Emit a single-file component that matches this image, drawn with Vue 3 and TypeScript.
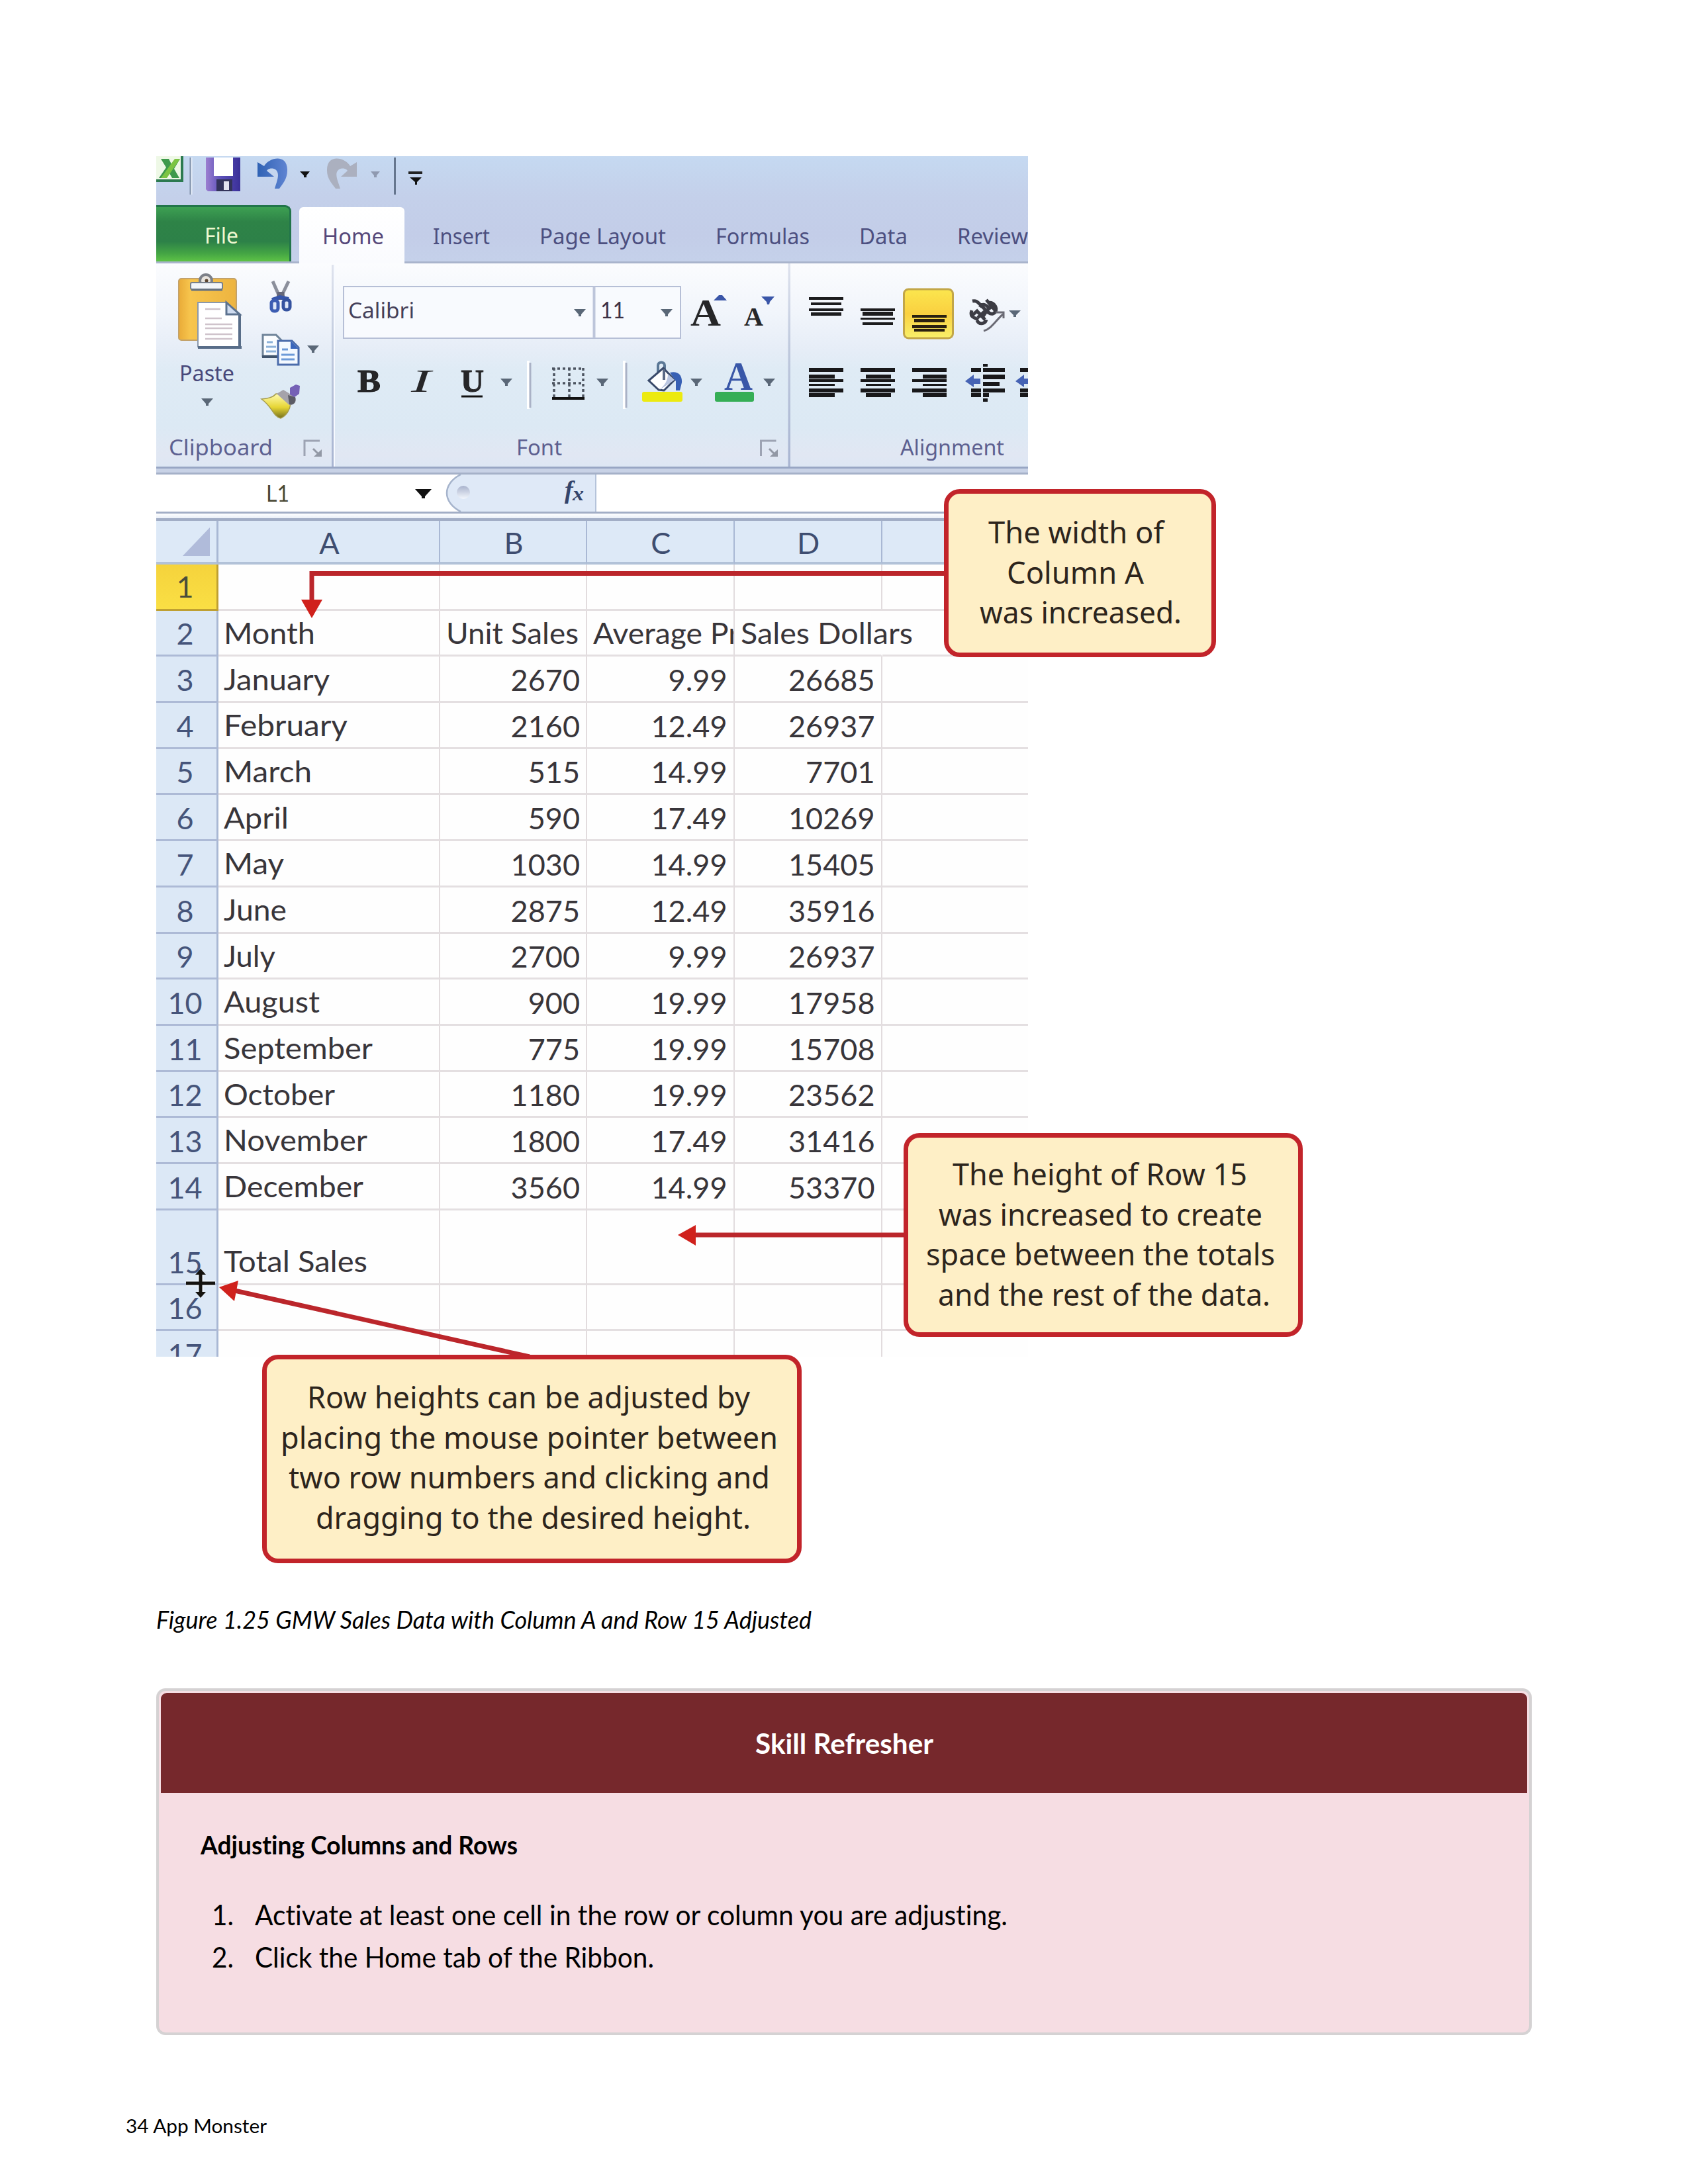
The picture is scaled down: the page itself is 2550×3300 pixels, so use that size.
<script setup lang="ts">
import { h } from 'vue'

interface FitProps { t: string; w: number; s: number; x?: number }

// One line of text set to an exact width; the box's bottom edge is the baseline.
const Fit = (p: FitProps) =>
  h('svg', { width: p.w, height: p.s, style: { display: 'block', flex: 'none', overflow: 'visible', marginLeft: p.x ? p.x + 'px' : undefined } }, [
    h('text', { x: 0, y: p.s, 'font-size': p.s, fill: 'currentColor', textLength: p.w, lengthAdjust: 'spacingAndGlyphs' }, p.t),
  ])
Fit.props = ['t', 'w', 's', 'x']

const tabs = [
  { t: 'Insert', w: 86, x: 43 },
  { t: 'Page Layout', w: 191, x: 75 },
  { t: 'Formulas', w: 142, x: 75 },
  { t: 'Data', w: 73, x: 75 },
  { t: 'Review', w: 107, x: 75 },
]

type Row = [string, number, string, string, string]
const rows: Row[] = [
  ['January', 160, '2670', '9.99', '26685'],
  ['February', 187, '2160', '12.49', '26937'],
  ['March', 133, '515', '14.99', '7701'],
  ['April', 98, '590', '17.49', '10269'],
  ['May', 91, '1030', '14.99', '15405'],
  ['June', 95, '2875', '12.49', '35916'],
  ['July', 78, '2700', '9.99', '26937'],
  ['August', 145, '900', '19.99', '17958'],
  ['September', 225, '775', '19.99', '15708'],
  ['October', 168, '1180', '19.99', '23562'],
  ['November', 217, '1800', '17.49', '31416'],
  ['December', 211, '3560', '14.99', '53370'],
]

const callouts = [
  { cls: 'c1', lines: [
    { t: 'The width of', x: 60, w: 265 }, { t: 'Column A', x: 88, w: 207 }, { t: 'was increased.', x: 47, w: 305 } ] },
  { cls: 'c2', lines: [
    { t: 'The height of Row 15', x: 67, w: 445 }, { t: 'was increased to create', x: 46, w: 489 },
    { t: 'space between the totals', x: 27, w: 527 }, { t: 'and the rest of the data.', x: 45, w: 502 } ] },
  { cls: 'c3', lines: [
    { t: 'Row heights can be adjusted by', x: 61, w: 669 }, { t: 'placing the mouse pointer between', x: 21, w: 751 },
    { t: 'two row numbers and clicking and', x: 33, w: 727 }, { t: 'dragging to the desired height.', x: 74, w: 657 } ] },
]

// [y, thickness, full?] strokes of the paragraph alignment icons
const para: [number, number, boolean][] = [
  [556, 6, true], [566, 6, false], [573, 4, true], [580, 3, false], [587, 6, true], [594, 6, false],
]
const aligns = [ { x: 1222, o: 0, w: 39 }, { x: 1300, o: 8, w: 38 }, { x: 1378, o: 16, w: 36 } ]
const carets = [[867, 467], [998, 467], [756, 572], [901, 572], [1043, 572], [1153, 572]]
</script>

<template>
  <main class="page">
    <section class="figure">
      <div class="shot">
        <svg class="qat" width="1317" height="74" viewBox="236 236 1317 74">
          <rect x="230" y="230" width="45" height="43" fill="#eef8e6" stroke="#2c7a50" stroke-width="4" />
          <path d="M243 240h12l5 10 5-10h7l-9 15 8 14h-11l-5-9-6 9h-9l11-16z" fill="#3f9a4c" />
          <path d="M264 240h8l-20 29h-9z" fill="#7cc443" />
          <path d="M288 238v56" stroke="#7f8fa8" stroke-width="3" />
          <path d="M289.500 238v56" stroke="#e6eefa" stroke-width="2" />
          <defs>
            <linearGradient id="disk" x1="0" x2="1"><stop offset="0" stop-color="#9c7fd0" /><stop offset=".45" stop-color="#5a4fb8" /><stop offset="1" stop-color="#3a2f98" /></linearGradient>
            <linearGradient id="undo" x1="0" x2="1"><stop offset="0" stop-color="#2f62b4" /><stop offset="1" stop-color="#5f84d2" /></linearGradient>
          </defs>
          <path d="M311 238h52v51h-49l-3-3z" fill="url(#disk)" />
          <rect x="323" y="238" width="29" height="28" fill="#fff" />
          <rect x="327" y="271" width="24" height="18" fill="#33335a" />
          <rect x="338" y="274" width="8" height="13" fill="#e3e3ee" />
          <path d="M389 245l10 6c8-14 36-19 35 7 0 12-7 20-12 27h-7c3-11 9-23 1-29-6-3-11-1-13 2l11 9h-25z" fill="url(#undo)" />
          <path d="M453 259h15l-5 6v3h-4v-3z" fill="#111" />
          <path d="M539 245l-10 6c-8-14-36-19-35 7 0 12 8 20 13 27h7c-3-11-10-23-2-29 6-3 11-1 13 2l-10 9h24z" fill="#abb0bf" />
          <path d="M560 259h14l-5 6v3h-4v-3z" fill="#8f99b0" />
          <path d="M596.500 238v56" stroke="#66768e" stroke-width="3" />
          <path d="M617 261h21" stroke="#222" stroke-width="4" />
          <path d="M619 268h18l-7 7v4h-3v-4z" fill="#111" />
        </svg>

        <nav class="tabs">
          <div class="tab file"><Fit t="File" :w="51" :s="32" /></div>
          <div class="tab home"><Fit t="Home" :w="93" :s="32" /></div>
          <Fit v-for="tab in tabs" :key="tab.t" class="plain" :t="tab.t" :w="tab.w" :s="32" :x="tab.x" />
        </nav>

        <div class="ribbon">
          <svg class="group" width="268" height="307" viewBox="236 398 268 307">
            <defs>
              <linearGradient id="board" x1="0" x2="1"><stop offset="0" stop-color="#e9ab38" /><stop offset=".2" stop-color="#f7c54d" /><stop offset="1" stop-color="#edb440" /></linearGradient>
              <linearGradient id="brush" x1="0" y1="0" x2="0" y2="1"><stop offset="0" stop-color="#fffbb0" /><stop offset=".55" stop-color="#e6d534" /><stop offset="1" stop-color="#75701e" /></linearGradient>
              <linearGradient id="sepg" x1="0" y1="0" x2="0" y2="1"><stop offset="0" stop-color="#dfe3ee" /><stop offset=".4" stop-color="#c0cade" /><stop offset="1" stop-color="#a9b5d2" /></linearGradient>
            </defs>
            <rect x="270" y="421" width="87" height="93" rx="4" fill="url(#board)" stroke="#c3a26a" stroke-width="2" />
            <circle cx="311" cy="424" r="9" fill="#e8e4de" stroke="#7c8088" stroke-width="4" />
            <circle cx="312" cy="424" r="2.500" fill="#5c4630" />
            <rect x="288" y="427" width="48" height="10" rx="2" fill="#f2f5f9" stroke="#77808c" stroke-width="2" />
            <path d="M289 438h47" stroke="#687380" stroke-width="3" />
            <path d="M299 457h43l21 18v49h-64z" fill="#fff" stroke="#8a98ab" stroke-width="2" />
            <path d="M362 474v50M299 525h66" stroke="#586d88" stroke-width="4" />
            <path d="M342 457v18h20z" fill="#cfdcf0" stroke="#5c728f" stroke-width="3" />
            <path d="M310 467h23M310 481h25M310 490h41M310 496h41M310 505h41M310 512h41" stroke="#cfc3cb" stroke-width="2.500" />
            <text x="271" y="576" font-size="32" textLength="83" lengthAdjust="spacingAndGlyphs" fill="#48487a">Paste</text>
            <path d="M304 602h18l-7 8v3h-4v-3z" fill="#5a6777" />
            <path d="M412 425l11 25M436 425l-12 25" stroke="#8b8f9b" stroke-width="5" fill="none" />
            <path d="M419 441h10l2 12h-14z" fill="#66687a" />
            <path d="M411 453l12-4 13 3" stroke="#3756aa" stroke-width="6" fill="none" />
            <rect x="410" y="454" width="10" height="16" rx="4" fill="#dfe9f8" stroke="#3c5db2" stroke-width="5" />
            <rect x="428" y="453" width="10" height="15" rx="4" fill="#dfe9f8" stroke="#34529f" stroke-width="5" />
            <path d="M397 506h20l8 8v24h-28z" fill="#fbfdff" stroke="#6f8499" stroke-width="3" />
            <path d="M396 539h24" stroke="#41546c" stroke-width="4" />
            <path d="M403 517h9M402 524h15M402 531h15" stroke="#8db2d9" stroke-width="3" />
            <path d="M420 515h21l10 10v26h-31z" fill="#f4f9ff" stroke="#4b6cab" stroke-width="3" />
            <path d="M439 515v12h12z" fill="#3a66bc" />
            <path d="M426 528h9M425 536h20M425 543h20" stroke="#6c9ad8" stroke-width="3" />
            <path d="M464 522h18l-7 8v3h-4v-3z" fill="#5a6777" />
            <path d="M395 603c9-1 17-2 22-8l10 1 12 14c-1 9-6 18-15 22-12-3-12-17-29-29z" fill="url(#brush)" stroke="#a59b4b" stroke-width="1.500" />
            <path d="M418 595l10-6 18 11c3 8-2 12-9 12z" fill="#a5a3aa" />
            <path d="M435 597l11 3c2 8-3 13-9 11z" fill="#5b5b65" />
            <path d="M438 586l9-5 6 2-1 12-7 5-7-4z" fill="#7561b6" />
            <text x="255" y="688" font-size="33" textLength="157" lengthAdjust="spacingAndGlyphs" fill="#5d6090">Clipboard</text>
            <path d="M460 689v-23h23" stroke="#9da3b3" stroke-width="3" fill="none" />
            <path d="M473 678l7 7" stroke="#9298a5" stroke-width="3" /><path d="M486 679v11h-12z" fill="#9298a5" />
            <rect x="501" y="400" width="3" height="305" fill="url(#sepg)" />
          </svg>

          <svg class="group" width="690" height="307" viewBox="504 398 690 307">
            <path d="M505 400v305" stroke="#f7faff" stroke-width="2" />
            <rect x="519" y="433" width="509" height="78" fill="#f8fafe" stroke="#b6bfd6" stroke-width="2" />
            <rect x="895.500" y="433" width="4" height="78" fill="#bdc5da" />
            <text x="526" y="481" font-size="33" textLength="100" lengthAdjust="spacingAndGlyphs" fill="#44405a">Calibri</text>
            <text x="907" y="481" font-size="34" textLength="37" lengthAdjust="spacingAndGlyphs" fill="#3c3044" font-family="Lato">11</text>
            <path v-for="c in carets" :key="c.join()" :d="`M${c[0]} ${c[1]}h18l-7 8v3h-4v-3z`" fill="#5a6777" />
            <g font-family="'Liberation Serif', serif" font-weight="700" fill="#262628">
              <text x="1043" y="492" font-size="58" textLength="46" lengthAdjust="spacingAndGlyphs">A</text>
              <text x="1124" y="492" font-size="41" textLength="29" lengthAdjust="spacingAndGlyphs">A</text>
              <text x="540" y="592" font-size="49" textLength="35" lengthAdjust="spacingAndGlyphs" stroke="#1a1a1c">B</text>
              <text x="621" y="592" font-size="49" textLength="30" lengthAdjust="spacingAndGlyphs" font-weight="400" font-style="italic">I</text>
              <text x="696" y="592" font-size="48" textLength="35" lengthAdjust="spacingAndGlyphs" stroke="#262628">U</text>
              <text x="1094" y="589" font-size="61" textLength="43" lengthAdjust="spacingAndGlyphs" fill="#3957a8">A</text>
            </g>
            <path d="M1078 454l8-8h5l7 8z" fill="#3a56a8" />
            <path d="M1150 448h20l-7 8-1 4h-3l-1-4z" fill="#3a56a8" />
            <path d="M697 599h32" stroke="#111" stroke-width="3" />
            <g v-for="x in [798, 943]" :key="x"><path :d="`M${x} 545v73`" stroke="#fff" stroke-width="4" /><path :d="`M${x + 3} 548v68`" stroke="#aab2c6" stroke-width="3" /></g>
            <path d="M837 556v45M860 556v45M881 556v45M834 557h48M834 579h48" stroke="#4c5460" stroke-width="3.500" stroke-dasharray="4 4" fill="none" />
            <path d="M834 602h49" stroke="#111" stroke-width="4" />
            <path d="M994 565v-13c0-6 10-6 10 0v15" fill="none" stroke="#5b7896" stroke-width="4" />
            <path d="M980 575l22-19 17 18-16 16-8-1z" fill="#fff" stroke="#3a4a6a" stroke-width="3" />
            <path d="M995 590l24-16-10-9c0 9-4 17-14 25z" fill="#b9c5e0" />
            <path d="M1003 558v16" stroke="#5b6a86" stroke-width="4" />
            <path d="M1012 563c11-3 19 3 18 15l-3 12h-6v-14z" fill="#3860b4" />
            <rect x="970" y="592" width="61" height="15" rx="3" fill="#ecea10" />
            <rect x="1080" y="592" width="59" height="15" rx="3" fill="#35ae55" />
            <text x="780" y="688" font-size="33" textLength="69" lengthAdjust="spacingAndGlyphs" fill="#5d6090">Font</text>
            <path d="M1149.500 689v-23h23" stroke="#9da3b3" stroke-width="3" fill="none" />
            <path d="M1162 678l7 7" stroke="#9298a5" stroke-width="3" /><path d="M1175 679v11h-12z" fill="#9298a5" />
            <rect x="1190.500" y="398" width="3.500" height="307" fill="url(#sepg)" />
          </svg>

          <svg class="group" width="359" height="307" viewBox="1194 398 359 307">
            <g fill="#1c1c1e">
              <path d="M1222 449h52v4h-52zM1225 457h46v4h-46zM1222 466h52v4h-52zM1225 472h46v5h-46z" />
              <path d="M1300 466h52v4h-52zM1303 471h46v6h-46zM1300 480h52v3h-52zM1303 487h46v4h-46z" />
            </g>
            <defs><linearGradient id="sel" x1="0" y1="0" x2="0" y2="1"><stop offset="0" stop-color="#fbe64e" /><stop offset=".5" stop-color="#fad040" /><stop offset="1" stop-color="#f8f06a" /></linearGradient></defs>
            <rect x="1365.500" y="437" width="74" height="74" rx="7" fill="url(#sel)" stroke="#c2a648" stroke-width="3" />
            <path d="M1378 476h52v4h-52zM1381 482h46v5h-46zM1378 491h52v5h-52zM1381 497h46v4h-46z" fill="#2a2010" />
            <g fill="none" stroke="#3c3c44" stroke-width="5">
              <path d="M1469 455c8-2 9 4 25 18M1468 469c-3 9 1 10 10 14M1467 478l9-8 12 13M1476 484c3 7 12 6 14-1M1477 480l12-11M1489 472l-6 9M1490 453l14 17M1480 464c5-7 11-3 16 4M1492 458c11-4 18 12 8 16-5 1-9-3-10-8" />
              <path d="M1486 500c12-3 20-18 29-25M1504 472h12v9" stroke-width="3" stroke="#6a6a74" />
            </g>
            <path d="M1524 469h18l-7 7v3h-4v-3z" fill="#5a6777" />
            <g v-for="a in aligns" :key="a.x">
              <rect v-for="p in para" :key="p[0]" :x="p[2] ? a.x : a.x + a.o" :y="p[0]" :width="p[2] ? 52 : a.w" :height="p[1]" fill="#18181a" />
            </g>
            <path d="M1467 556h15v6h-15zM1467 587h15v6h-15zM1467 594h15v6h-15zM1485 556h33v6h-33zM1485 566h33v7h-33zM1485 577h25v6h-25zM1485 587h33v6h-33zM1485 594h9v6h-9zM1485 550h7v4h-7zM1485 602h7v5h-7zM1541 556h12v6h-12zM1541 587h12v6h-12zM1541 594h12v6h-12z" fill="#18181a" />
            <path d="M1458 576l13-10v6h10v8h-10v5z" fill="#4663b4" />
            <path d="M1534 576l13-10v6h6v8h-6v5z" fill="#4663b4" />
            <text x="1360" y="688" font-size="33" textLength="157" lengthAdjust="spacingAndGlyphs" fill="#5d6090">Alignment</text>
          </svg>
        </div>

        <div class="strip"></div>
        <div class="formula">
          <svg width="1317" height="56" viewBox="236 717 1317 56">
            <text x="402" y="758" font-family="Lato" font-size="34" textLength="35" lengthAdjust="spacingAndGlyphs" fill="#4a4834">L1</text>
            <path d="M627 739h25l-10 11v3h-5v-3z" fill="#111" />
            <path d="M696 717c-28 14-28 42 0 56h204v-56z" fill="#dfe9f7" />
            <path d="M696 717c-28 14-28 42 0 56" fill="none" stroke="#a6b4cc" stroke-width="2.500" />
            <defs><linearGradient id="knob" x1="0" y1="0" x2="0" y2="1"><stop offset="0" stop-color="#a9b3cd" /><stop offset="1" stop-color="#f3f7fd" /></linearGradient></defs>
            <circle cx="700" cy="744" r="10" fill="url(#knob)" />
            <text x="853" y="753" font-family="'Liberation Serif', serif" font-style="italic" font-weight="700" font-size="38" fill="#34446a">f</text>
            <text x="865" y="756" font-family="'Liberation Serif', serif" font-style="italic" font-weight="700" font-size="29" textLength="17" lengthAdjust="spacingAndGlyphs" fill="#34446a">x</text>
            <path d="M900 717v56" stroke="#b5c3da" stroke-width="2" />
          </svg>
        </div>
        <div class="gap"></div>

        <div class="grid">
          <div class="row head">
            <div class="num corner"><svg width="41" height="43"><path d="M41 0v43H0z" fill="#b0bbda" /></svg></div>
            <div class="a">A</div><div class="b">B</div><div class="c">C</div><div class="d">D</div><div class="e"></div>
          </div>
          <div class="row first"><div class="num">1</div><div class="a"></div><div class="b"></div><div class="c"></div><div class="d"></div><div class="e"></div></div>
          <div class="row titles">
            <div class="num">2</div>
            <div class="a"><Fit t="Month" :w="138" :s="45" /></div>
            <div class="b"><Fit t="Unit Sales" :w="200" :s="45" /></div>
            <div class="c"><Fit t="Average Pr" :w="221" :s="45" /></div>
            <div class="d"><Fit t="Sales Dollars" :w="260" :s="45" /></div>
            <div class="e"></div>
          </div>
          <div v-for="(r, i) in rows" :key="r[0]" class="row">
            <div class="num">{{ i + 3 }}</div>
            <div class="a"><Fit :t="r[0]" :w="r[1]" :s="45" /></div>
            <div class="b">{{ r[2] }}</div><div class="c">{{ r[3] }}</div><div class="d">{{ r[4] }}</div><div class="e"></div>
          </div>
          <div class="row tall"><div class="num">15</div><div class="a"><Fit t="Total Sales" :w="217" :s="45" /></div><div class="b"></div><div class="c"></div><div class="d"></div><div class="e"></div></div>
          <div class="row"><div class="num">16</div><div class="a"></div><div class="b"></div><div class="c"></div><div class="d"></div><div class="e"></div></div>
          <div class="row"><div class="num">17</div><div class="a"></div><div class="b"></div><div class="c"></div><div class="d"></div><div class="e"></div></div>
        </div>
      </div>

      <svg class="arrows" width="1740" height="2130" viewBox="236 236 1740 2130">
        <g fill="none" stroke="#bb262b" stroke-width="7">
          <path d="M1430 866.500H471v42" />
          <path d="M1370 1866H1046" />
          <path d="M800 2050L350 1949" />
        </g>
        <g fill="#d0211c">
          <path d="M455 906h32l-16 28z" /><path d="M1051 1851v31l-27-16z" /><path d="M331 1945l29-10-6 31z" />
        </g>
        <path d="M281 1939h44M303 1922v35" stroke="#fff" stroke-width="9" opacity=".5" />
        <path d="M281 1939h44M303 1922v35" stroke="#15130f" stroke-width="5" />
        <path d="M303 1917l8 9h-16zM303 1961l8-9h-16z" fill="#15130f" />
      </svg>

      <div v-for="c in callouts" :key="c.cls" class="callout" :class="c.cls">
        <Fit v-for="l in c.lines" :key="l.t" :t="l.t" :x="l.x" :w="l.w" :s="46" />
      </div>
    </section>

    <div class="caption"><Fit t="Figure 1.25 GMW Sales Data with Column A and Row 15 Adjusted" :w="990" :s="37.5" /></div>

    <section class="skill">
      <header><Fit t="Skill Refresher" :w="269" :s="41.7" /></header>
      <div class="body">
        <h3><Fit t="Adjusting Columns and Rows" :w="479" :s="37.5" /></h3>
        <div class="item"><Fit t="1." :w="33" :s="41.7" /><Fit t="Activate at least one cell in the row or column you are adjusting." :w="1137" :s="41.7" /></div>
        <div class="item"><Fit t="2." :w="33" :s="41.7" /><Fit t="Click the Home tab of the Ribbon." :w="603" :s="41.7" /></div>
      </div>
    </section>

    <footer><Fit t="34 App Monster" :w="213" :s="29.2" /></footer>
  </main>
</template>

<style>
body { margin: 0; background: #fff; }
</style>

<style scoped>
.page { width: 2550px; height: 3300px; box-sizing: border-box; padding: 236px 236px 0; background: #fff; color: #000; font-family: Lato, sans-serif; font-variant-ligatures: none; overflow: hidden; }
.figure { position: relative; height: 2130px; font-family: "Noto Sans", sans-serif; }
.shot { width: 1317px; height: 1814px; overflow: hidden; background: linear-gradient(#c5d9f1 0, #c4d0ea 62px, #c3cde8 120px, #c5d1ea 160px); }
.qat { display: block; }
.tabs { height: 88px; display: flex; align-items: flex-start; box-sizing: border-box; border-bottom: 3px solid #a9b4cc; color: #4c4f80; white-space: nowrap; }
.tab { box-sizing: border-box; height: 88px; flex: none; }
.file { width: 204px; padding: 23px 0 0 73px; color: #eef8d0; border: 3px solid #22754a; border-left: 0; border-bottom: 0; border-radius: 0 9px 0 0; background: linear-gradient(#3da052 0, #2e8347 22px, #2d8148 52px, #44a544 70px, #62c746 84px); height: 85px; }
.home { width: 159px; margin-left: 12px; padding: 24px 0 0 35px; margin-top: 3px; height: 85px; background: linear-gradient(#fff, #fafbfe); border-radius: 6px 6px 0 0; color: #56487a; }
.plain { margin-top: 27px; }
.ribbon { display: flex; height: 307px; background: linear-gradient(#fbfcfe 0, #f1f5fb 75px, #e6edf7 130px, #dfebf5 160px, #dce9f4 245px, #e1e7f3 290px, #dde7f4 307px); border-bottom: 3px solid #98a6c4; }
.group { display: block; flex: none; }
.strip { height: 6px; background: #c8d2e6; border-bottom: 3px solid #a5b1c8; }
.formula { height: 56px; background: #fff; }
.formula svg { display: block; }
.gap { height: 7px; border-top: 3px solid #a2aec6; background: linear-gradient(#fff, #e9eff8); }
.grid { background: #fefefe; border-top: 4px solid #a2aec6; font: 45px/45px Lato, sans-serif; color: #38353a; }
.row { display: flex; height: 69.7px; }
.row > div { box-sizing: border-box; flex: none; display: flex; align-items: flex-end; justify-content: flex-end; border-right: 2.500px solid #e2dcde; border-bottom: 3px solid #e4dfe1; padding-bottom: 9px; padding-right: 9px; white-space: nowrap; }
.row > .num { width: 94px; background: #dce8f6; border-right: 3px solid #a9b8d4; border-bottom: 3px solid #adbad6; color: #45547a; justify-content: center; padding-right: 4px; }
.row > .a { width: 335px; justify-content: flex-start; padding: 0 0 16.500px 8px; }
.row > .b { width: 222px; }
.row > .c { width: 222.500px; overflow: hidden; }
.row > .d { width: 223px; }
.row > .e { width: 221px; border-right: 0; }
.head { height: 66px; }
.row.head > div { background: #dde9f7; border-right-color: #a9b8d4; border-bottom: 4px solid #b2c2d8; justify-content: center; align-items: flex-end; color: #3e4d70; padding: 0 0 6px 2px; }
.row.head > .corner { padding: 0 10px 9px 0; justify-content: flex-end; }
.row.first > .num { background: linear-gradient(#f5d33c, #fadf44); border-color: #bfa032; color: #4a4d3a; padding-bottom: 11px; }
.row.titles > .b, .row.titles > .c, .row.titles > .d { justify-content: flex-start; padding: 0 0 16.500px 9px; }
.row.titles > .c { overflow: hidden; }
.row.titles > .d { border-right-color: transparent; }
.tall { height: 113px; }
.arrows { position: absolute; left: 0; top: 0; }
.callout { position: absolute; box-sizing: border-box; display: flex; flex-direction: column; gap: 14.500px; border: 7px solid #c2242a; border-radius: 24px; background: #feefc6; color: #2d251c; white-space: nowrap; }
.c1 { left: 1190px; top: 503px; width: 411px; height: 254px; padding-top: 29px; }
.c2 { left: 1129px; top: 1476px; width: 603px; height: 308px; padding-top: 26px; }
.c3 { left: 160px; top: 1811px; width: 815px; height: 315px; padding-top: 28px; }
.caption { padding-top: 57px; font-style: italic; height: 128px; }
.skill { box-sizing: border-box; width: 2078px; height: 524px; border: 4px solid #d5d2d3; border-radius: 14px; background: #f6dde3; padding: 3px; }
.skill header { height: 151px; box-sizing: border-box; display: flex; justify-content: center; padding-top: 50px; background: #76282c; color: #fff; border-radius: 9px 9px 0 0; font-weight: 700; }
.body { padding: 55px 0 0 60px; }
.skill h3 { margin: 0 0 65px; font-weight: 700; }
.item { display: flex; gap: 32px; margin: 0 0 22.500px 17px; }
footer { margin: 119px 0 0 -46px; }
</style>
